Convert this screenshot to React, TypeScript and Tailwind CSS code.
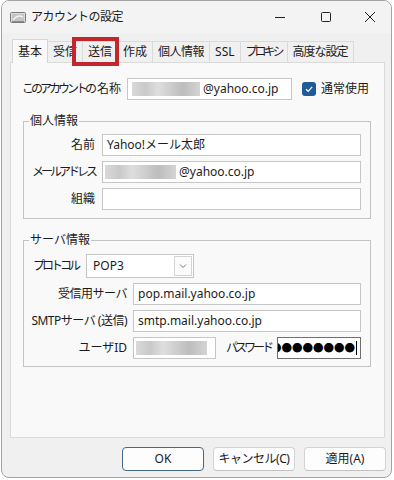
import React from 'react';

const tabs = [
  { t: '基本', c: '' },
  { t: '受信', c: '' },
  { t: '送信', c: '' },
  { t: '作成', c: '' },
  { t: '個人情報', c: 'tracking-[-0.5px]' },
  { t: 'SSL', c: '' },
  { t: 'プロキシ', c: 'tracking-[-3px]' },
  { t: '高度な設定', c: 'tracking-[-1px]' },
];

const Blur: React.FC<{ w: string }> = ({ w }) => (
  <span
    className={`${w} h-[14px] inline-block bg-[linear-gradient(90deg,#d9d9d9_0%,#c9c9c9_20%,#dedede_38%,#cfcfcf_55%,#bdbdbd_75%,#d4d4d4_100%)]`}
  />
);

const App: React.FC = () => {
  return (
    <div className="w-[394px] h-[480px] bg-white whitespace-nowrap font-['Noto_Sans','Noto_Sans_CJK_JP',sans-serif] text-[12px] text-[#1b1b1b]">
      <div className="ml-[1px] w-[391px] h-[478px] rounded-[8px] border border-[#a3a3a3] bg-[#f0f0f0] flex flex-col overflow-hidden">
        {/* Title bar */}
        <div className="h-[32px] flex items-center bg-[#f3f3f3] shrink-0">
          <svg className="ml-[8px] w-[16px] h-[13px]" viewBox="0 0 16 13">
            <rect x="0.5" y="1.5" width="15" height="10" rx="1" fill="#dcdcdc" stroke="#7a7a7a" />
            <rect x="2" y="3" width="12" height="7" fill="#c4c4c4" />
            <path d="M3 9 Q8 3 13 6" fill="none" stroke="#f5f5f5" strokeWidth="1.4" />
            <rect x="2" y="10" width="12" height="1" fill="#8a8a8a" />
          </svg>
          <span className="ml-[5px] text-[12px] tracking-[-0.5px]">アカウントの設定</span>
          <div className="ml-auto flex items-center">
            <svg className="w-[12px] h-[12px] mr-[34px]" viewBox="0 0 12 12">
              <line x1="1" y1="6.5" x2="11" y2="6.5" stroke="#222" strokeWidth="1" />
            </svg>
            <svg className="w-[12px] h-[12px] mr-[32px]" viewBox="0 0 12 12">
              <rect x="1.5" y="1.5" width="9" height="9" rx="1" fill="none" stroke="#222" strokeWidth="1" />
            </svg>
            <svg className="w-[12px] h-[12px] mr-[15px]" viewBox="0 0 12 12">
              <path d="M1 1 L11 11 M11 1 L1 11" stroke="#222" strokeWidth="1" />
            </svg>
          </div>
        </div>

        {/* Tabs */}
        <div className="relative mt-[6px] pl-[10px] h-[23px] flex items-end shrink-0">
          {tabs.map(({ t, c }, i) =>
            i === 0 ? (
              <div
                key={t}
                className="relative z-10 h-[24px] mb-[-1px] px-[5px] flex items-center bg-[#f9f9f9] border border-b-0 border-[#d6d6d6]"
              >
                {t}
              </div>
            ) : (
              <div
                key={t}
                className={`h-[21px] -ml-px px-[5px] flex items-center bg-[#f0f0f0] border border-b-0 border-[#dadada] ${c}`}
              >
                {t}
              </div>
            )
          )}
          <div className="absolute z-20 left-[70px] top-[-2px] w-[47px] h-[29px] border-[4px] border-[#c1272d]" />
        </div>

        {/* Panel */}
        <div className="ml-[8px] w-[375px] h-[376px] border border-[#dadada] bg-[#f9f9f9] shrink-0">
          <div className="pt-[15px] pl-[11px] flex items-center">
            <span className="w-[105px]">
              <span className="tracking-[-3px]">このアカウントの</span>
              <span className="ml-[3px]">名称</span>
            </span>
            <div className="w-[165px] h-[22px] bg-white border border-[#c6c6c6] flex items-center pl-[4px]">
              <Blur w="w-[68px]" />
              <span className="ml-[3px]">@yahoo.co.jp</span>
            </div>
            <span className="ml-[10px] w-[14px] h-[14px] rounded-[3px] bg-[#205b96] flex items-center justify-center">
              <svg className="w-[10px] h-[10px]" viewBox="0 0 10 10">
                <path d="M2 5.2 L4.2 7.3 L8.2 2.8" fill="none" stroke="#fff" strokeWidth="1.2" />
              </svg>
            </span>
            <span className="ml-[5px]">通常使用</span>
          </div>

          <fieldset className="mt-[13px] ml-[12px] w-[348px] border border-[#c3c3c3] pt-[5px] pb-[8px]">
            <legend className="ml-[5px] px-[1px] leading-[16px]">個人情報</legend>
            <div className="flex flex-col gap-[5px]">
              <div className="flex items-center">
                <span className="w-[71px] text-right">名前</span>
                <div className="ml-[7px] w-[259px] h-[22px] bg-white border border-[#c6c6c6] flex items-center pl-[4px]">
                  Yahoo!メール太郎
                </div>
              </div>
              <div className="flex items-center">
                <span className="w-[71px] text-right tracking-[-3px]">メールアドレス</span>
                <div className="ml-[7px] w-[259px] h-[22px] bg-white border border-[#c6c6c6] flex items-center pl-[2px]">
                  <Blur w="w-[71px]" />
                  <span className="ml-[3px]">@yahoo.co.jp</span>
                </div>
              </div>
              <div className="flex items-center">
                <span className="w-[71px] text-right">組織</span>
                <div className="ml-[7px] w-[259px] h-[22px] bg-white border border-[#c6c6c6]" />
              </div>
            </div>
          </fieldset>

          <fieldset className="mt-[13px] ml-[12px] w-[348px] border border-[#c3c3c3] pt-[6px] pb-[7px]">
            <legend className="ml-[5px] px-[1px] leading-[16px]">サーバ情報</legend>
            <div className="flex flex-col gap-[5px]">
              <div className="flex items-center pl-[9px]">
                <span className="w-[53px] tracking-[-3px]">プロトコル</span>
                <div className="w-[108px] h-[24px] bg-white border border-[#c6c6c6] flex items-center pl-[6px] pr-px">
                  <span>POP3</span>
                  <div className="ml-auto w-[18px] h-[20px] bg-[#fbfbfb] border border-[#d4d4d4] flex items-center justify-center">
                    <svg className="w-[8px] h-[6px]" viewBox="0 0 8 6">
                      <path d="M1 1.5 L4 4.5 L7 1.5" fill="none" stroke="#777" strokeWidth="1" />
                    </svg>
                  </div>
                </div>
              </div>
              <div className="flex items-center">
                <span className="w-[103px] text-right tracking-[-0.5px]">受信用サーバ</span>
                <div className="ml-[6px] w-[228px] h-[22px] bg-white border border-[#c6c6c6] flex items-center pl-[4px]">
                  pop.mail.yahoo.co.jp
                </div>
              </div>
              <div className="flex items-center">
                <span className="w-[103px] text-right tracking-[-0.5px]">SMTPサーバ (送信)</span>
                <div className="ml-[6px] w-[228px] h-[22px] bg-white border border-[#c6c6c6] flex items-center pl-[4px]">
                  smtp.mail.yahoo.co.jp
                </div>
              </div>
              <div className="flex items-center">
                <span className="w-[103px] text-right">ユーザID</span>
                <div className="ml-[6px] w-[83px] h-[22px] bg-white border border-[#c6c6c6] flex items-center pl-[2px]">
                  <Blur w="w-[71px]" />
                </div>
                <span className="ml-[10px] w-[47px] tracking-[-3px]">パスワード</span>
                <div className="ml-[4px] w-[84px] h-[22px] bg-white border border-[#6f6f6f] flex items-center justify-end overflow-hidden pr-[3px]">
                  <span className="font-['Noto_Sans_CJK_JP',sans-serif] text-[10.5px] leading-none text-black">
                    ●●●●●●●●
                  </span>
                  <span className="ml-px w-px h-[14px] bg-black shrink-0" />
                </div>
              </div>
            </div>
          </fieldset>
        </div>

        {/* Buttons */}
        <div className="mt-[9px] flex justify-end gap-[9px] pr-[5px]">
          <button className="w-[82px] h-[24px] rounded-[4px] bg-[#fdfdfd] border border-[#3f6a8a] text-[12px]">
            OK
          </button>
          <button className="w-[82px] h-[24px] rounded-[4px] bg-[#fdfdfd] border border-[#d3d3d3] border-b-[#c2c2c2] text-[12px] tracking-[-0.5px]">
            キャンセル(C)
          </button>
          <button className="w-[82px] h-[24px] rounded-[4px] bg-[#fdfdfd] border border-[#d3d3d3] border-b-[#c2c2c2] text-[12px]">
            適用(A)
          </button>
        </div>
      </div>
    </div>
  );
};

export default App;
